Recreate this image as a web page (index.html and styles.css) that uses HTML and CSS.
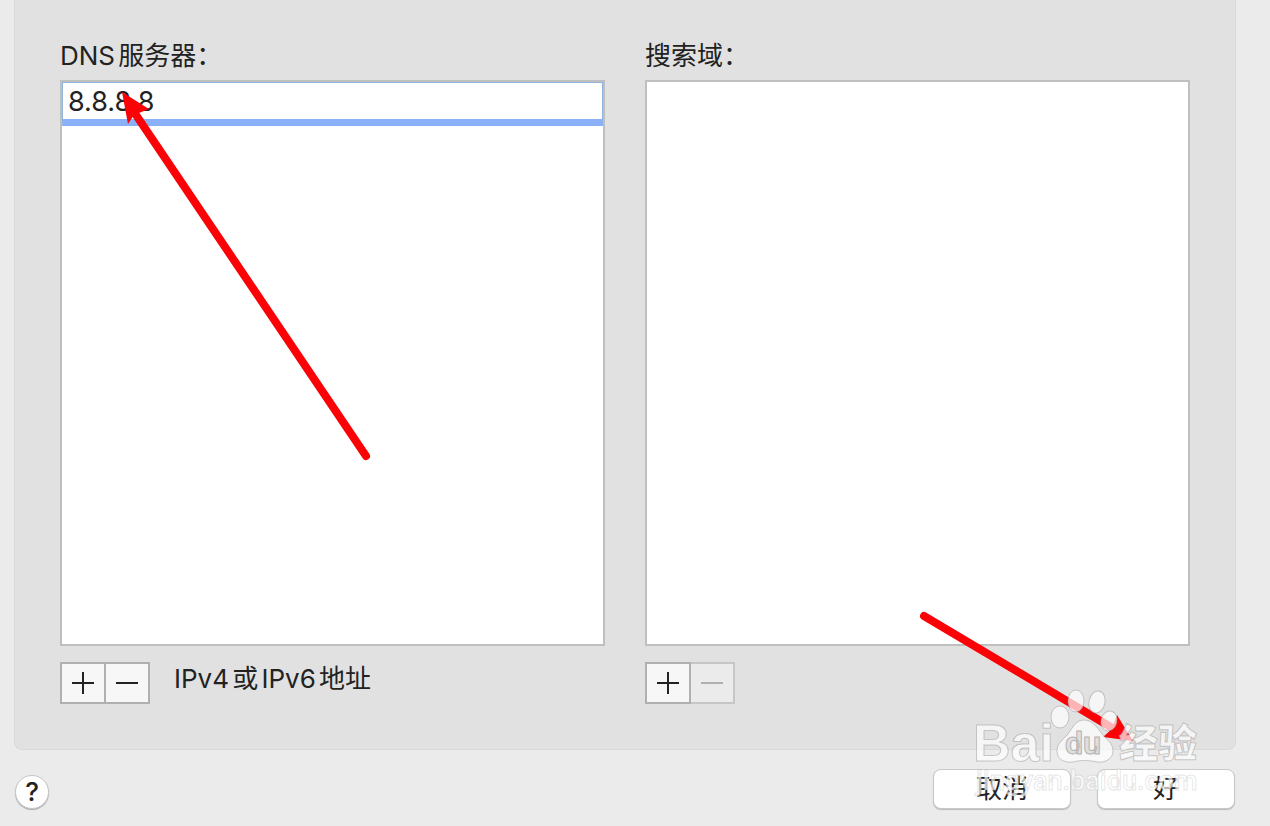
FILE: index.html
```html
<!DOCTYPE html>
<html lang="zh-CN">
<head>
	<meta charset="utf-8">
	<title>DNS</title>
	<link rel="stylesheet" href="styles.css">
</head>
<body>
<form class="page">
	<div class="panel">
		<!-- DNS 服务器 -->
		<div class="column">
			<label class="title" for="dns">DNS服务器：</label>
			<div class="list">
				<input class="entry" type="text" id="dns" name="dns" value="8.8.8.8">
			</div>
			<div class="tools">
				<div class="pair">
					<button type="button" class="tool" aria-label="添加">
						<svg width="22" height="22" viewBox="0 0 22 22"><path d="M0 11H22M11 0V22"/></svg>
					</button>
					<button type="button" class="tool" aria-label="删除">
						<svg width="22" height="22" viewBox="0 0 22 22"><path d="M0 11H22"/></svg>
					</button>
				</div>
				<span class="hint">IPv4或IPv6地址</span>
			</div>
		</div>
		<!-- 搜索域 -->
		<div class="column">
			<div class="title">搜索域：</div>
			<div class="list"></div>
			<div class="tools">
				<div class="pair">
					<button type="button" class="tool" aria-label="添加">
						<svg width="22" height="22" viewBox="0 0 22 22"><path d="M0 11H22M11 0V22"/></svg>
					</button>
					<button type="button" class="tool" aria-label="删除" disabled>
						<svg width="22" height="22" viewBox="0 0 22 22"><path d="M0 11H22"/></svg>
					</button>
				</div>
			</div>
		</div>
	</div>
	<div class="footer">
		<button type="button" class="help">?</button>
		<div class="actions">
			<button type="button" class="action">取消</button>
			<button type="submit" class="action">好</button>
		</div>
	</div>

	<!-- 箭头 -->
	<svg class="arrow arrow-dns" width="260" height="380" viewBox="115 85 260 380">
		<path class="shaft" d="M366 456L134 112"/>
		<path class="head" d="M122 92L149 109L134 115L128 124Z"/>
	</svg>
	<svg class="arrow arrow-ok" width="230" height="140" viewBox="910 606 230 140">
		<path class="shaft" d="M924 616L1114 729"/>
		<path class="head" d="M1133 741L1117 715L1112 729L1103 737Z"/>
	</svg>

	<!-- 水印 -->
	<svg class="watermark" width="245" height="130" viewBox="965 680 245 130">
		<g class="mark">
			<text class="bai" x="973" y="761">Bai</text>
			<ellipse cx="1060" cy="717" rx="9" ry="11"/>
			<ellipse cx="1076" cy="701" rx="8" ry="11"/>
			<ellipse cx="1097" cy="702" rx="8" ry="11" transform="rotate(12 1097 702)"/>
			<ellipse cx="1109" cy="721" rx="8" ry="10" transform="rotate(15 1109 721)"/>
			<path d="M1084 720C1092 720 1097 727 1102 734C1107 740 1113 743 1113 751C1113 759 1105 763 1097 762C1088 760 1081 760 1073 762C1064 763 1057 759 1057 751C1057 743 1063 740 1068 734C1073 727 1076 720 1084 720Z"/>
			<text class="jingyan" x="1119" y="757">经验</text>
		</g>
		<text class="du" x="1065" y="754">du</text>
		<text class="site" x="976" y="790">jingyan.baidu.com</text>
	</svg>
</form>
</body>
</html>
```
FILE: styles.css
```css
* {
	box-sizing: border-box;
}
body {
	margin: 0;
	background: #ebebeb;
	color: #222;
	font: 26px/32px Inter, "Noto Sans CJK SC", sans-serif;
	text-autospace: normal;
}
.page {
	position: relative;
	display: flex;
	flex-direction: column;
	min-height: 100vh;
}
.panel {
	flex: 1;
	display: grid;
	grid-template-columns: 1fr 1fr;
	gap: 40px;
	margin: 0 34px 0 14px;
	padding: 40px 45px 45px;
	background: #e1e1e1;
	border: 1px solid #dadada;
	border-top: 0;
	border-radius: 0 0 8px 8px;
}
.column {
	display: flex;
	flex-direction: column;
}
.title {
	margin-bottom: 8px;
}
.list {
	flex: 1;
	background: #fff;
	border: 2px solid #bfbfbf;
}
.entry {
	display: block;
	width: 100%;
	height: 44px;
	padding: 0 5px;
	border: 1px solid #8db4dc;
	border-bottom: 7px solid #8ab1f7;
	outline: 0;
	background: #fff;
	color: #222;
	font: 27px Inter, sans-serif;
}
.tools {
	display: flex;
	gap: 24px;
	margin-top: 16px;
}
.hint {
	line-height: 34px;
}
.pair {
	display: flex;
}
.tool {
	display: flex;
	align-items: center;
	justify-content: center;
	width: 46px;
	height: 42px;
	padding: 0;
	background: #f7f7f7;
	border: 2px solid #b0b0b0;
}
.tool + .tool {
	width: 44px;
	border-left: 0;
}
.tool:disabled {
	background: #ebebeb;
	border-color: #c6c6c6;
}
.tool path {
	stroke: #222;
	stroke-width: 2;
}
.tool:disabled path {
	stroke: #b0b0b0;
}

/* bottom bar */
.footer {
	display: flex;
	align-items: flex-end;
	justify-content: space-between;
	padding: 19px 35px 17px 15px;
}
.help {
	width: 34px;
	height: 34px;
	padding: 0;
	background: #fff;
	border: 1px solid #c8c8c8;
	border-radius: 50%;
	box-shadow: 0 1px 1px #aaa;
	color: #222;
	font: 500 26px/32px Inter, sans-serif;
}
.actions {
	display: flex;
	gap: 26px;
}
.action {
	width: 138px;
	height: 40px;
	padding: 0;
	background: #fff;
	border: 1px solid #c8c8c8;
	border-radius: 8px;
	box-shadow: 0 1px 1px #bbb;
	color: #222;
	font: inherit;
}

/* arrows and watermark lie over the dialog */
.arrow, .watermark {
	position: absolute;
	pointer-events: none;
}
.arrow-dns {
	left: 115px;
	top: 85px;
}
.arrow-ok {
	right: 130px;
	bottom: 80px;
}
.shaft {
	stroke: #fb0207;
	stroke-width: 8;
	stroke-linecap: round;
}
.head {
	fill: #fb0207;
}
.watermark {
	right: 60px;
	bottom: 16px;
}
.mark {
	fill: #fff;
	fill-opacity: .7;
	stroke: #999;
	stroke-opacity: .5;
	stroke-width: 1;
}
.bai {
	font: bold 52px "Liberation Sans", sans-serif;
}
.jingyan {
	font: 900 39px "Noto Sans CJK SC", sans-serif;
}
.du {
	fill: #dedede;
	stroke: #b4b4b4;
	stroke-width: 1;
	font: bold 32px Roboto, sans-serif;
}
.site {
	fill: #fff;
	fill-opacity: .7;
	stroke: #aaa;
	stroke-opacity: .3;
	stroke-width: 1;
	font: 500 27px Roboto, sans-serif;
}
```
